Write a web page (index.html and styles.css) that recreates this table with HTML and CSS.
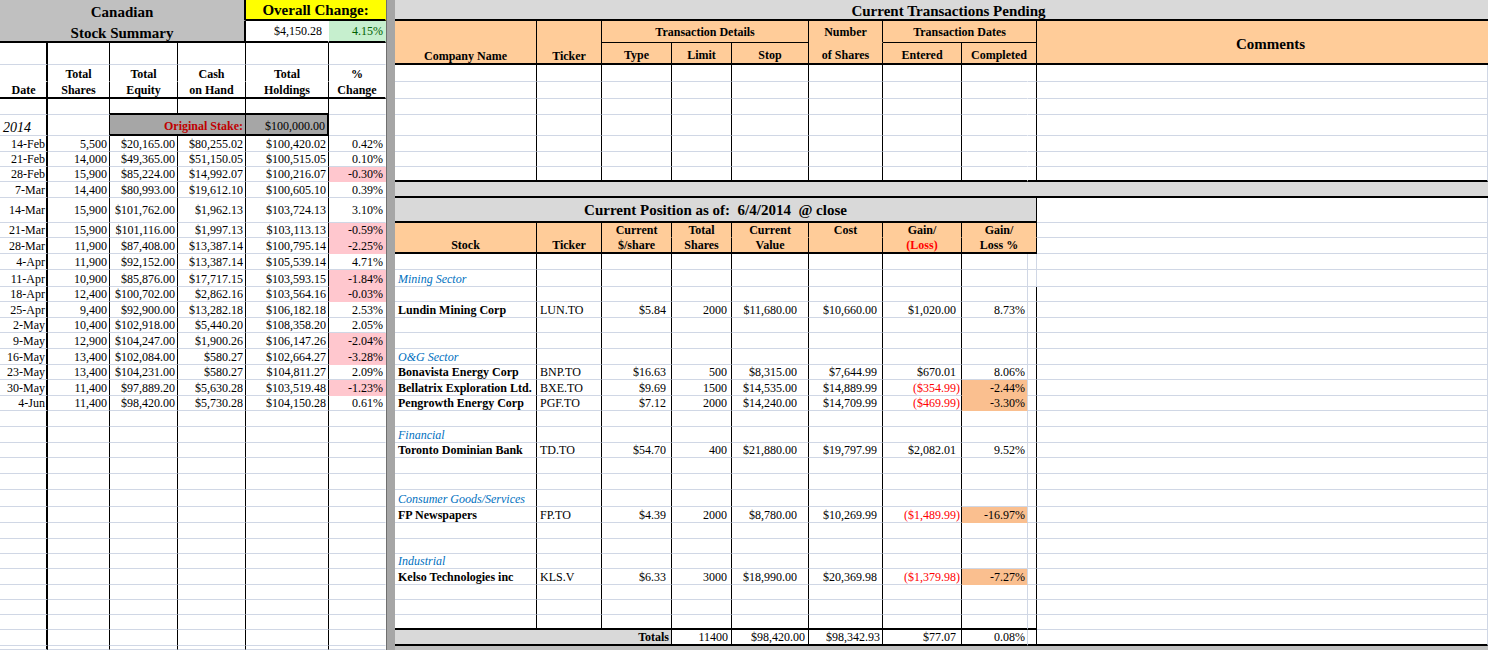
FILE: index.html
```html
<!DOCTYPE html>
<html lang="en">
<head>
<meta charset="utf-8">
<title>Canadian Stock Summary</title>
<link rel="stylesheet" href="styles.css">
</head>
<body>
<div class="sheet">
<table class="lt">
<colgroup><col class="w48"><col class="w62"><col class="w68"><col class="w68"><col class="w83"><col class="w57"></colgroup>
<tbody>
<tr class="h21"><td colspan="4" class="ttl">Canadian</td><td colspan="2" class="ovr">Overall Change:</td></tr>
<tr class="h22"><td colspan="4" class="ttl ttl2">Stock Summary</td><td class="ovv">$4,150.28</td><td class="ovp">4.15%</td></tr>
</tbody>
<tbody class="lg">
<tr class="h22"><td></td><td></td><td></td><td></td><td></td><td></td></tr>
<tr class="h17 hd nb"><td></td><td>Total</td><td>Total</td><td>Cash</td><td>Total</td><td>%</td></tr>
<tr class="h17 hd kb"><td>Date</td><td>Shares</td><td>Equity</td><td>on Hand</td><td>Holdings</td><td>Change</td></tr>
<tr class="h16"><td></td><td></td><td class="bxt"></td><td class="bxt"></td><td class="bxt"></td><td></td></tr>
<tr class="h21"><td class="yr">2014</td><td></td><td colspan="2" class="stk">Original Stake:</td><td class="stv">$100,000.00</td><td class="nil"></td></tr>
<tr class="h16"><td>14-Feb</td><td>5,500</td><td>$20,165.00</td><td>$80,255.02</td><td>$100,420.02</td><td>0.42%</td></tr>
<tr class="h15"><td>21-Feb</td><td>14,000</td><td>$49,365.00</td><td>$51,150.05</td><td>$100,515.05</td><td>0.10%</td></tr>
<tr class="h15"><td>28-Feb</td><td>15,900</td><td>$85,224.00</td><td>$14,992.07</td><td>$100,216.07</td><td class="neg">-0.30%</td></tr>
<tr class="h16"><td>7-Mar</td><td>14,400</td><td>$80,993.00</td><td>$19,612.10</td><td>$100,605.10</td><td>0.39%</td></tr>
<tr class="h25 mid"><td>14-Mar</td><td>15,900</td><td>$101,762.00</td><td>$1,962.13</td><td>$103,724.13</td><td>3.10%</td></tr>
<tr class="h15"><td>21-Mar</td><td>15,900</td><td>$101,116.00</td><td>$1,997.13</td><td>$103,113.13</td><td class="neg">-0.59%</td></tr>
<tr class="h16"><td>28-Mar</td><td>11,900</td><td>$87,408.00</td><td>$13,387.14</td><td>$100,795.14</td><td class="neg">-2.25%</td></tr>
<tr class="h16"><td>4-Apr</td><td>11,900</td><td>$92,152.00</td><td>$13,387.14</td><td>$105,539.14</td><td>4.71%</td></tr>
<tr class="h17"><td>11-Apr</td><td>10,900</td><td>$85,876.00</td><td>$17,717.15</td><td>$103,593.15</td><td class="neg">-1.84%</td></tr>
<tr class="h15"><td>18-Apr</td><td>12,400</td><td>$100,702.00</td><td>$2,862.16</td><td>$103,564.16</td><td class="neg">-0.03%</td></tr>
<tr class="h16"><td>25-Apr</td><td>9,400</td><td>$92,900.00</td><td>$13,282.18</td><td>$106,182.18</td><td>2.53%</td></tr>
<tr class="h15"><td>2-May</td><td>10,400</td><td>$102,918.00</td><td>$5,440.20</td><td>$108,358.20</td><td>2.05%</td></tr>
<tr class="h16"><td>9-May</td><td>12,900</td><td>$104,247.00</td><td>$1,900.26</td><td>$106,147.26</td><td class="neg">-2.04%</td></tr>
<tr class="h16"><td>16-May</td><td>13,400</td><td>$102,084.00</td><td>$580.27</td><td>$102,664.27</td><td class="neg">-3.28%</td></tr>
<tr class="h15"><td>23-May</td><td>13,400</td><td>$104,231.00</td><td>$580.27</td><td>$104,811.27</td><td>2.09%</td></tr>
<tr class="h16"><td>30-May</td><td>11,400</td><td>$97,889.20</td><td>$5,630.28</td><td>$103,519.48</td><td class="neg">-1.23%</td></tr>
<tr class="h15"><td>4-Jun</td><td>11,400</td><td>$98,420.00</td><td>$5,730.28</td><td>$104,150.28</td><td>0.61%</td></tr>
<tr class="h16"><td></td><td></td><td></td><td></td><td></td><td></td></tr>
<tr class="h16"><td></td><td></td><td></td><td></td><td></td><td></td></tr>
<tr class="h15"><td></td><td></td><td></td><td></td><td></td><td></td></tr>
<tr class="h16"><td></td><td></td><td></td><td></td><td></td><td></td></tr>
<tr class="h16"><td></td><td></td><td></td><td></td><td></td><td></td></tr>
<tr class="h17"><td></td><td></td><td></td><td></td><td></td><td></td></tr>
<tr class="h16"><td></td><td></td><td></td><td></td><td></td><td></td></tr>
<tr class="h16"><td></td><td></td><td></td><td></td><td></td><td></td></tr>
<tr class="h15"><td></td><td></td><td></td><td></td><td></td><td></td></tr>
<tr class="h15"><td></td><td></td><td></td><td></td><td></td><td></td></tr>
<tr class="h16"><td></td><td></td><td></td><td></td><td></td><td></td></tr>
<tr class="h15"><td></td><td></td><td></td><td></td><td></td><td></td></tr>
<tr class="h15"><td></td><td></td><td></td><td></td><td></td><td></td></tr>
<tr class="h15"><td></td><td></td><td></td><td></td><td></td><td></td></tr>
<tr class="h16"><td></td><td></td><td></td><td></td><td></td><td></td></tr>
<tr class="h4"><td></td><td></td><td></td><td></td><td></td><td></td></tr>
</tbody>
</table>

<div class="sep"></div>

<table class="rt">
<colgroup><col class="w142"><col class="w65"><col class="w70"><col class="w60"><col class="w77"><col class="w74"><col class="w79"><col class="w66"><col class="w9"><col class="w451"></colgroup>
<tbody>
<tr class="h21"><td colspan="10" class="ctp">Current Transactions Pending</td></tr>
<tr class="h22"><td rowspan="2" class="ph pb">Company Name</td><td rowspan="2" class="ph pb">Ticker</td><td colspan="3" class="ph pl pm">Transaction Details</td><td class="ph pm">Number</td><td colspan="3" class="ph pl pm">Transaction Dates</td><td rowspan="2" class="ph pb cm">Comments</td></tr>
<tr class="h22"><td class="ph pb p3">Type</td><td class="ph pb p3">Limit</td><td class="ph pb p3">Stop</td><td class="ph pb p3">of Shares</td><td class="ph pb p3">Entered</td><td colspan="2" class="ph pb p3">Completed</td></tr>
</tbody>
<tbody class="pend">
<tr class="h17"><td></td><td></td><td></td><td></td><td></td><td></td><td></td><td></td><td></td><td></td></tr>
<tr class="h17"><td></td><td></td><td></td><td></td><td></td><td></td><td></td><td></td><td></td><td></td></tr>
<tr class="h16"><td></td><td></td><td></td><td></td><td></td><td></td><td></td><td></td><td></td><td></td></tr>
<tr class="h21"><td></td><td></td><td></td><td></td><td></td><td></td><td></td><td></td><td></td><td></td></tr>
<tr class="h16"><td></td><td></td><td></td><td></td><td></td><td></td><td></td><td></td><td></td><td></td></tr>
<tr class="h15"><td></td><td></td><td></td><td></td><td></td><td></td><td></td><td></td><td></td><td></td></tr>
<tr class="h15 kb"><td></td><td></td><td></td><td></td><td></td><td></td><td></td><td></td><td></td><td></td></tr>
</tbody>
<tbody>
<tr class="h16"><td colspan="10" class="gbar"></td></tr>
<tr class="h25"><td colspan="9" class="cpos">Current Position as of:&nbsp; 6/4/2014 &nbsp;@ close</td><td></td></tr>
<tr class="h15"><td rowspan="2" class="ph pb">Stock</td><td rowspan="2" class="ph pb">Ticker</td><td class="ph">Current</td><td class="ph">Total</td><td class="ph">Current</td><td class="ph">Cost</td><td class="ph">Gain/</td><td colspan="2" class="ph">Gain/</td><td></td></tr>
<tr class="h16"><td class="ph pb">$/share</td><td class="ph pb">Shares</td><td class="ph pb">Value</td><td class="ph pb"></td><td class="ph pb red">(Loss)</td><td colspan="2" class="ph pb">Loss %</td><td></td></tr>
</tbody>
<tbody class="pos">
<tr class="h16"><td></td><td></td><td></td><td></td><td></td><td></td><td></td><td></td><td class="ig"></td><td></td></tr>
<tr class="h17"><td class="sec">Mining Sector</td><td></td><td></td><td></td><td></td><td></td><td></td><td></td><td class="ig"></td><td></td></tr>
<tr class="h15"><td></td><td></td><td></td><td></td><td></td><td></td><td></td><td></td><td></td><td></td></tr>
<tr class="h16"><td>Lundin Mining Corp</td><td>LUN.TO</td><td>$5.84</td><td>2000</td><td>$11,680.00</td><td>$10,660.00</td><td>$1,020.00</td><td>8.73%</td><td></td><td></td></tr>
<tr class="h15"><td></td><td></td><td></td><td></td><td></td><td></td><td></td><td></td><td></td><td></td></tr>
<tr class="h16"><td></td><td></td><td></td><td></td><td></td><td></td><td></td><td></td><td></td><td></td></tr>
<tr class="h16"><td class="sec">O&amp;G Sector</td><td></td><td></td><td></td><td></td><td></td><td></td><td></td><td></td><td></td></tr>
<tr class="h15"><td>Bonavista Energy Corp</td><td>BNP.TO</td><td>$16.63</td><td>500</td><td>$8,315.00</td><td>$7,644.99</td><td>$670.01</td><td>8.06%</td><td></td><td></td></tr>
<tr class="h16"><td>Bellatrix Exploration Ltd.</td><td>BXE.TO</td><td>$9.69</td><td>1500</td><td>$14,535.00</td><td>$14,889.99</td><td class="nv">($354.99)</td><td class="og">-2.44%</td><td></td><td></td></tr>
<tr class="h15"><td>Pengrowth Energy Corp</td><td>PGF.TO</td><td>$7.12</td><td>2000</td><td>$14,240.00</td><td>$14,709.99</td><td class="nv">($469.99)</td><td class="og">-3.30%</td><td></td><td></td></tr>
<tr class="h16"><td></td><td></td><td></td><td></td><td></td><td></td><td></td><td></td><td></td><td></td></tr>
<tr class="h16"><td class="sec">Financial</td><td></td><td></td><td></td><td></td><td></td><td></td><td></td><td></td><td></td></tr>
<tr class="h15"><td>Toronto Dominian Bank</td><td>TD.TO</td><td>$54.70</td><td>400</td><td>$21,880.00</td><td>$19,797.99</td><td>$2,082.01</td><td>9.52%</td><td></td><td></td></tr>
<tr class="h16"><td></td><td></td><td></td><td></td><td></td><td></td><td></td><td></td><td></td><td></td></tr>
<tr class="h16"><td></td><td></td><td></td><td></td><td></td><td></td><td></td><td></td><td></td><td></td></tr>
<tr class="h17"><td class="sec">Consumer Goods/Services</td><td></td><td></td><td></td><td></td><td></td><td></td><td></td><td></td><td></td></tr>
<tr class="h16"><td>FP Newspapers</td><td>FP.TO</td><td>$4.39</td><td>2000</td><td>$8,780.00</td><td>$10,269.99</td><td class="nv">($1,489.99)</td><td class="og">-16.97%</td><td></td><td></td></tr>
<tr class="h16"><td></td><td></td><td></td><td></td><td></td><td></td><td></td><td></td><td></td><td></td></tr>
<tr class="h15"><td></td><td></td><td></td><td></td><td></td><td></td><td></td><td></td><td></td><td></td></tr>
<tr class="h15"><td class="sec">Industrial</td><td></td><td></td><td></td><td></td><td></td><td></td><td></td><td></td><td></td></tr>
<tr class="h16"><td>Kelso Technologies inc</td><td>KLS.V</td><td>$6.33</td><td>3000</td><td>$18,990.00</td><td>$20,369.98</td><td class="nv">($1,379.98)</td><td class="og">-7.27%</td><td></td><td></td></tr>
<tr class="h15"><td></td><td></td><td></td><td></td><td></td><td></td><td></td><td></td><td></td><td></td></tr>
<tr class="h15"><td></td><td></td><td></td><td></td><td></td><td></td><td></td><td></td><td></td><td></td></tr>
<tr class="h15 kb"><td></td><td></td><td></td><td></td><td></td><td></td><td></td><td></td><td></td><td></td></tr>
</tbody>
<tbody>
<tr class="h16"><td colspan="3" class="tot">Totals</td><td class="tc tk tp3">11400</td><td class="tc tk tp3">$98,420.00</td><td class="tc tk">$98,342.93</td><td class="tc tk tp5">$77.07</td><td class="tc">0.08%</td><td class="tc tk"></td><td class="tc"></td></tr>
<tr class="h4"><td colspan="10" class="btm"></td></tr>
</tbody>
</table>
</div>
</body>
</html>
```

FILE: styles.css
```css
* { box-sizing: border-box; }
html, body { margin: 0; padding: 0; background: #ffffff; }
body {
  font-family: "Liberation Serif", "Times New Roman", serif;
  font-size: 12px;
  color: #000;
  width: 1488px;
  height: 650px;
  overflow: hidden;
}
.sheet { display: flex; align-items: flex-start; }

table { border-collapse: separate; border-spacing: 0; table-layout: fixed; }
td {
  padding: 0 2px;
  border-right: 1px solid #d0d7e5;
  border-bottom: 1px solid #d0d7e5;
  white-space: nowrap;
  vertical-align: bottom;
  line-height: 14px;
  text-align: right;
  overflow: visible;
}

/* row heights */
.h4 { height: 4px; }
.h15 { height: 15px; }
.h16 { height: 16px; }
.h17 { height: 17px; }
.h21 { height: 21px; }
.h22 { height: 22px; }
.h25 { height: 25px; }

/* column widths */
.w9 { width: 9px; } .w48 { width: 48px; } .w57 { width: 57px; } .w60 { width: 60px; }
.w62 { width: 62px; } .w65 { width: 65px; } .w66 { width: 66px; } .w68 { width: 68px; }
.w70 { width: 70px; } .w74 { width: 74px; } .w77 { width: 77px; } .w79 { width: 79px; }
.w83 { width: 83px; } .w142 { width: 142px; } .w451 { width: 451px; }

/* ---------- left sheet ---------- */
.lt { width: 386px; flex: none; }
.ttl {
  background: #c0c0c0;
  font-size: 15px;
  font-weight: bold;
  line-height: 15px;
  text-align: center;
  border-right: 2px solid #000;
  border-bottom: 1px solid transparent;
}
.ttl2 { border-bottom: 2px solid #000; }
.ovr {
  background: #ffff00;
  font-size: 15px;
  font-weight: bold;
  line-height: 18px;
  text-align: center;
  border-right: 1px solid transparent;
  border-bottom: 2px solid #000;
}
.ovv { border-right: 1px solid transparent; border-bottom: 2px solid #000; padding-right: 6px; vertical-align: middle; }
.ovp { background: #c6efce; color: #006100; border-right: 1px solid transparent; border-bottom: 2px solid #000; vertical-align: middle; }

.lg td { border-right-color: #000; }
.lg td:nth-child(1) { border-right: 2px solid #000; padding-right: 1px; }
.lg td:nth-child(6) { border-right-color: transparent; }
.lg tr.hd td { font-weight: bold; text-align: center; }
.lg tr.nb td { border-bottom-color: transparent; }
.lg tr.kb td { border-bottom: 2px solid #000; }
.lg tr.mid td { vertical-align: middle; }
.lg td.bxt { border-bottom: 2px solid #000; }
.lg td.yr { font-style: italic; font-size: 14px; text-align: left; padding-left: 3px; }
.lg td.stk {
  background: #a6a6a6;
  color: #c00000;
  font-weight: bold;
  border-right: 1px solid #000;
  border-bottom: 2px solid #000;
  padding-bottom: 1px;
}
.lg td.stv { background: #a6a6a6; border-right: 2px solid #000; border-bottom: 2px solid #000; padding-bottom: 1px; }
.lg td.nil { border-right-color: transparent; }
.lg td.neg { background: #ffc7ce; border-bottom-color: #ffc7ce; }

.sep {
  flex: none;
  width: 9px;
  height: 650px;
  background: #a6a6a6;
  border-left: 1px solid #6f6f6f;
}

/* ---------- right sheet ---------- */
.rt { width: 1093px; flex: none; }
.ctp {
  background: #d9d9d9;
  font-size: 15px;
  font-weight: bold;
  line-height: 15px;
  text-align: center;
  padding-left: 16px;
  border-right: none;
  border-bottom: 2px solid #000;
}
.ph {
  background: #ffcc99;
  font-weight: bold;
  text-align: center;
  border-right: 1px solid #000;
  border-bottom: 1px solid transparent;
}
.pb { border-bottom: 2px solid #000; }
.pl { border-bottom: 1px solid #000; }
.pm { vertical-align: middle; }
.p3 { padding-bottom: 1px; }
.cm { vertical-align: middle; font-size: 15px; border-right: none; padding-left: 18px; padding-top: 3px; }
.red { color: #ff0000; }

.pend td:nth-child(-n+7), .pend td:nth-child(9) { border-right-color: #000; }
.pend td:nth-child(8) { border-right-color: transparent; }
.pend tr.kb td { border-bottom: 2px solid #000; }

.gbar { background: #d9d9d9; border-right: none; border-bottom: 2px solid #000; }
.cpos {
  background: #d9d9d9;
  font-size: 15px;
  font-weight: bold;
  line-height: 18px;
  text-align: center;
  vertical-align: middle;
  border-right: 1px solid #000;
  border-bottom: 2px solid #000;
}

.pos td:nth-child(-n+7), .pos td:nth-child(9) { border-right-color: #000; }
.pos td.ig { border-right-color: #d0d7e5; }
.pos tr.kb td:nth-child(-n+9) { border-bottom: 2px solid #000; }
.pos td:nth-child(1) { text-align: left; font-weight: bold; padding-left: 3px; }
.pos td:nth-child(2) { text-align: left; padding-left: 3px; }
.pos td:nth-child(3) { padding-right: 5px; }
.pos td:nth-child(4) { padding-right: 4px; }
.pos td:nth-child(5) { padding-right: 11px; }
.pos td:nth-child(6) { padding-right: 5px; }
.pos td:nth-child(7) { padding-right: 5px; }
.pos td.nv { padding-right: 1px; color: #ff0000; }
.pos td.sec { font-style: italic; font-weight: normal; color: #0070c0; }
.pos td.og { background: #fabf8f; border-bottom-color: #fabf8f; }

.tot { background: #d9d9d9; font-weight: bold; border-right: 1px solid #000; border-bottom: 2px solid #000; }
.tc { border-bottom: 2px solid #000; }
.tk { border-right-color: #000; }
.tp3 { padding-right: 3px; }
.tp5 { padding-right: 5px; }
.btm { background: #c0c0c0; border-right: none; border-bottom: none; }
```
